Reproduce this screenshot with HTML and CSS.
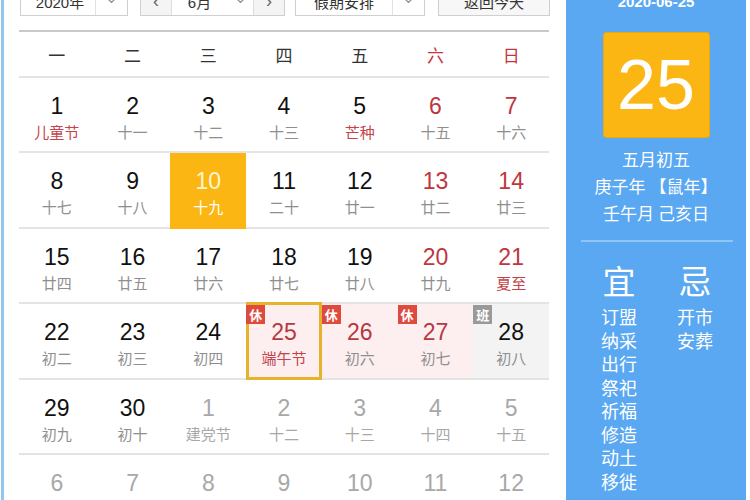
FILE: index.html
```html
<!DOCTYPE html>
<html lang="zh-CN">
<head>
<meta charset="utf-8">
<title>万年历</title>
<link rel="stylesheet" href="styles.css">
</head>
<body>
<div class="frame">
  <div class="main">
    <div class="toolbar">
      <div class="sel year"><span class="sel-text">2020年</span><span class="sel-arrow"><svg width="9" height="6" viewBox="0 0 9 6"><path d="M1 1l3.5 3.5L8 1" fill="none" stroke="#888" stroke-width="1.2"/></svg></span></div>
      <div class="month-group">
        <span class="nav">&lsaquo;</span>
        <div class="month"><span class="sel-text">6月</span><span class="sel-arrow"><svg width="9" height="6" viewBox="0 0 9 6"><path d="M1 1l3.5 3.5L8 1" fill="none" stroke="#888" stroke-width="1.2"/></svg></span></div>
        <span class="nav">&rsaquo;</span>
      </div>
      <div class="sel holiday"><span class="sel-text">假期安排</span><span class="sel-arrow"><svg width="9" height="6" viewBox="0 0 9 6"><path d="M1 1l3.5 3.5L8 1" fill="none" stroke="#888" stroke-width="1.2"/></svg></span></div>
      <div class="btn-today">返回今天</div>
    </div>

    <div class="cal">
      <div class="week">
        <span>一</span><span>二</span><span>三</span><span>四</span><span>五</span><span class="we">六</span><span class="we">日</span>
      </div>
      <div class="days">
        <div class="day"><b>1</b><i class="fest">儿童节</i></div>
        <div class="day"><b>2</b><i>十一</i></div>
        <div class="day"><b>3</b><i>十二</i></div>
        <div class="day"><b>4</b><i>十三</i></div>
        <div class="day"><b>5</b><i class="fest">芒种</i></div>
        <div class="day we"><b>6</b><i>十五</i></div>
        <div class="day we"><b>7</b><i>十六</i></div>

        <div class="day"><b>8</b><i>十七</i></div>
        <div class="day"><b>9</b><i>十八</i></div>
        <div class="day today"><b>10</b><i>十九</i></div>
        <div class="day"><b>11</b><i>二十</i></div>
        <div class="day"><b>12</b><i>廿一</i></div>
        <div class="day we"><b>13</b><i>廿二</i></div>
        <div class="day we"><b>14</b><i>廿三</i></div>

        <div class="day"><b>15</b><i>廿四</i></div>
        <div class="day"><b>16</b><i>廿五</i></div>
        <div class="day"><b>17</b><i>廿六</i></div>
        <div class="day"><b>18</b><i>廿七</i></div>
        <div class="day"><b>19</b><i>廿八</i></div>
        <div class="day we"><b>20</b><i>廿九</i></div>
        <div class="day we"><b>21</b><i class="fest">夏至</i></div>

        <div class="day"><b>22</b><i>初二</i></div>
        <div class="day"><b>23</b><i>初三</i></div>
        <div class="day"><b>24</b><i>初四</i></div>
        <div class="day rest selected"><span class="tag">休</span><b>25</b><i class="fest">端午节</i></div>
        <div class="day rest"><span class="tag">休</span><b>26</b><i>初六</i></div>
        <div class="day rest"><span class="tag">休</span><b>27</b><i>初七</i></div>
        <div class="day work"><span class="tag">班</span><b>28</b><i>初八</i></div>

        <div class="day"><b>29</b><i>初九</i></div>
        <div class="day"><b>30</b><i>初十</i></div>
        <div class="day other"><b>1</b><i>建党节</i></div>
        <div class="day other"><b>2</b><i>十二</i></div>
        <div class="day other"><b>3</b><i>十三</i></div>
        <div class="day other"><b>4</b><i>十四</i></div>
        <div class="day other"><b>5</b><i>十五</i></div>

        <div class="day other"><b>6</b><i>十六</i></div>
        <div class="day other"><b>7</b><i>十七</i></div>
        <div class="day other"><b>8</b><i>十八</i></div>
        <div class="day other"><b>9</b><i>十九</i></div>
        <div class="day other"><b>10</b><i>二十</i></div>
        <div class="day other"><b>11</b><i>廿一</i></div>
        <div class="day other"><b>12</b><i>廿二</i></div>
      </div>
    </div>
  </div>

  <aside class="panel">
    <div class="p-date">2020-06-25</div>
    <div class="p-big">25</div>
    <div class="p-lunar">
      <div>五月初五</div>
      <div>庚子年 【鼠年】</div>
      <div>壬午月 己亥日</div>
    </div>
    <div class="p-sep"></div>
    <div class="p-yiji">
      <div class="p-col">
        <div class="p-head">宜</div>
        <div>订盟</div><div>纳采</div><div>出行</div><div>祭祀</div><div>祈福</div><div>修造</div><div>动土</div><div>移徙</div>
      </div>
      <div class="p-col">
        <div class="p-head">忌</div>
        <div>开市</div><div>安葬</div>
      </div>
    </div>
  </aside>
</div>
</body>
</html>
```

FILE: styles.css
```css
html, body {
  margin: 0;
  padding: 0;
  width: 750px;
  height: 500px;
  overflow: hidden;
  background: #fff;
}

body {
  font-family: "Liberation Sans", "Noto Sans CJK SC", sans-serif;
  color: #222;
  padding-left: 1px;
  box-sizing: border-box;
}

.frame {
  display: flex;
  margin-top: -14px;
  border-left: 3px solid #92c6ef;
  height: 530px;
}

.main {
  width: 561px;
  padding-left: 15px;
  box-sizing: border-box;
}

/* toolbar */
.toolbar {
  display: flex;
  height: 30px;
  padding-left: 1px;
}

.sel, .month-group, .btn-today {
  display: flex;
  align-items: center;
  height: 30px;
  box-sizing: border-box;
  border: 1px solid #cfcfcf;
  background: #fff;
  font-size: 15px;
  color: #333;
}

.sel-text {
  flex: 1;
  text-align: center;
}

.sel-arrow {
  width: 31px;
  height: 100%;
  display: flex;
  align-items: center;
  justify-content: center;
  border-left: 1px solid #e2e2e2;
}

.year { width: 108px; }
.year .sel-text { padding-left: 4px; }

.month-group {
  width: 145px;
  margin-left: 12px;
}

.nav {
  width: 30px;
  height: 100%;
  display: flex;
  align-items: center;
  justify-content: center;
  background: #f4f4f4;
  color: #666;
  font-size: 18px;
}

.month {
  flex: 1;
  display: flex;
  align-items: center;
  height: 100%;
  border-left: 1px solid #ddd;
  border-right: 1px solid #ddd;
}
.month .sel-arrow { border-left: none; width: 26px; }

.holiday {
  width: 130px;
  margin-left: 10px;
}

.btn-today {
  width: 112px;
  margin-left: 13px;
  justify-content: center;
  background: #f7f7f7;
}

/* calendar */
.cal {
  margin-top: 14px;
  width: 530px;
  border-top: 2px solid #c9c9c9;
}

.week {
  display: grid;
  grid-template-columns: repeat(7, 1fr);
  height: 44px;
  align-items: center;
  border-bottom: 2px solid #e4e4e4;
  font-family: "Noto Sans CJK SC", sans-serif;
  font-size: 17px;
  color: #333;
}
.week span { text-align: center; }
.week .we { color: #c4363c; }

.days {
  display: grid;
  grid-template-columns: repeat(7, 1fr);
  grid-auto-rows: 75.4px;
}

.day {
  position: relative;
  box-sizing: border-box;
  border-bottom: 2px solid #e4e4e4;
  padding-top: 15px;
  text-align: center;
}

.day b {
  display: block;
  font-weight: normal;
  font-size: 23px;
  line-height: 26px;
  color: #111;
}

.day i {
  display: block;
  font-style: normal;
  font-family: "Noto Sans CJK SC", sans-serif;
  font-size: 15px;
  line-height: 26px;
  color: #8f8f8f;
}

.day i.fest { color: #c4434a; }
.day.we b { color: #c0363d; }

.day.today {
  background: #fbb613;
  border-bottom-color: #fbb613;
}
.day.today b { color: #fff6cf; }
.day.today i { color: #fff; }

.day.rest { background: #fdeff0; }
.day.rest b { color: #b53940; }
.day.work { background: #f3f3f3; }

.day.selected::after {
  content: "";
  position: absolute;
  top: -2px;
  left: 0;
  right: 0;
  bottom: -2px;
  border: 3px solid #e6b42a;
}

.tag {
  position: absolute;
  top: 1px;
  left: 0;
  width: 19px;
  height: 19px;
  line-height: 19px;
  background: #df4a3f;
  color: #fff;
  font-family: "Noto Sans CJK SC", sans-serif;
  font-size: 13px;
  font-weight: bold;
  z-index: 1;
}
.day.work .tag { background: #9a9a9a; }

.day.other b { color: #a8a8a8; }
.day.other i { color: #a8a8a8; }

/* right panel */
.panel {
  width: 180px;
  margin-left: 1px;
  background: #5aa8f1;
  color: #fff;
  text-align: center;
  font-family: "Noto Sans CJK SC", sans-serif;
}

.p-date {
  padding-top: 4px;
  line-height: 24px;
  font-family: "Liberation Sans", sans-serif;
  font-size: 15px;
  font-weight: bold;
}

.p-big {
  width: 105px;
  height: 104px;
  margin: 19px auto 0;
  background: #fbb613;
  border-radius: 3px;
  box-shadow: 0 0 0 1px #eaa90f;
  font-family: "Liberation Sans", sans-serif;
  font-size: 70px;
  line-height: 104px;
  color: #fff;
}

.p-lunar {
  margin-top: 8px;
  font-size: 17px;
  line-height: 27px;
}

.p-sep {
  height: 2px;
  margin: 14px 13px 0 15px;
  background: #8fc6f6;
}

.p-yiji {
  display: flex;
  padding-left: 23px;
  gap: 16px;
  margin-top: 18px;
}

.p-col {
  width: 60px;
  font-size: 18px;
  line-height: 23.5px;
}

.p-head {
  font-size: 33px;
  line-height: 40px;
  margin-bottom: 5px;
}
```
